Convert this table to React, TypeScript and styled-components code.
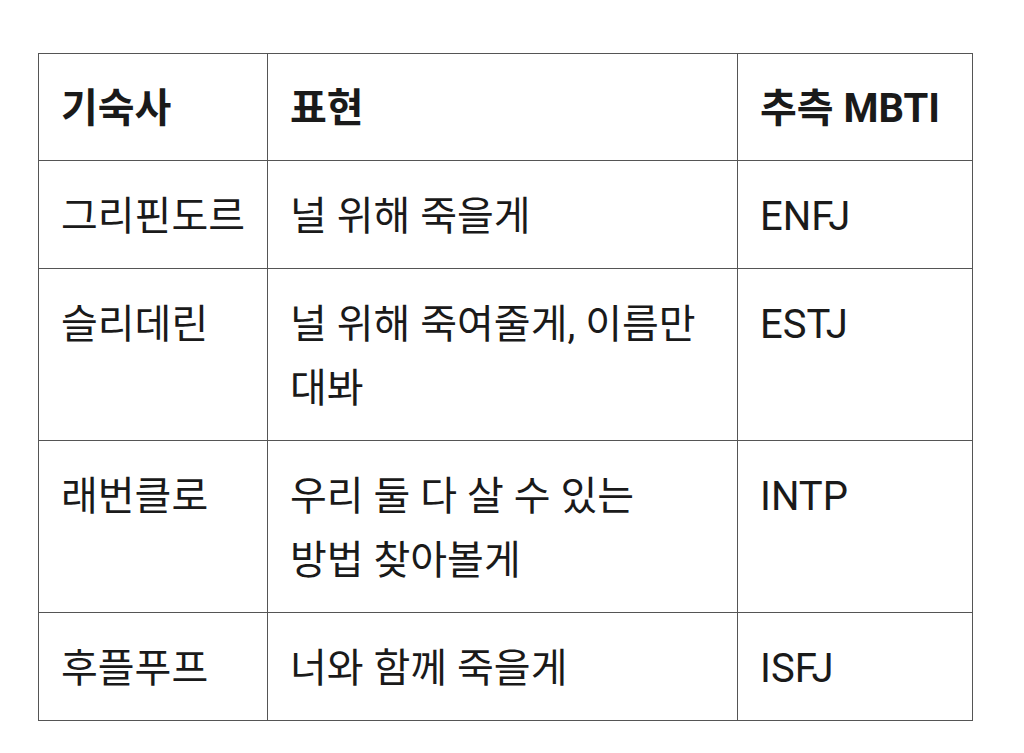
import styled, { createGlobalStyle } from "styled-components";

const GlobalStyle = createGlobalStyle`
  body {
    margin: 0;
    background: #ffffff;
    font-family: Roboto, "Noto Sans CJK KR", sans-serif;
    color: #1a1a1a;
  }
`;

const Page = styled.main`
  padding: 53px 0 0 38px;
`;

const Table = styled.table`
  border-collapse: collapse;
  font-size: 40px;
  line-height: 64px;
  word-break: keep-all;
`;

const Cell = styled.td<{ $width: number }>`
  width: ${(p) => p.$width}px;
  box-sizing: border-box;
  padding: 24px 22px 19px;
  border: 1px solid #555;
  vertical-align: top;
  text-align: left;
`;

const HeadCell = styled(Cell).attrs({ as: "th" })`
  font-weight: 700;
  padding-top: 23px;
`;

const widths = [229, 470, 235];

const rows = [
  ["그리핀도르", "널 위해 죽을게", "ENFJ"],
  ["슬리데린", "널 위해 죽여줄게, 이름만 대봐", "ESTJ"],
  ["래번클로", "우리 둘 다 살 수 있는 방법 찾아볼게", "INTP"],
  ["후플푸프", "너와 함께 죽을게", "ISFJ"],
];

export default function App() {
  return (
    <>
      <GlobalStyle />
      <Page>
        <Table>
          <thead>
            <tr>
              {["기숙사", "표현", "추측 MBTI"].map((h, i) => (
                <HeadCell key={h} $width={widths[i]}>
                  {h}
                </HeadCell>
              ))}
            </tr>
          </thead>
          <tbody>
            {rows.map((r) => (
              <tr key={r[0]}>
                {r.map((c, i) => (
                  <Cell key={i} $width={widths[i]}>
                    {c}
                  </Cell>
                ))}
              </tr>
            ))}
          </tbody>
        </Table>
      </Page>
    </>
  );
}
